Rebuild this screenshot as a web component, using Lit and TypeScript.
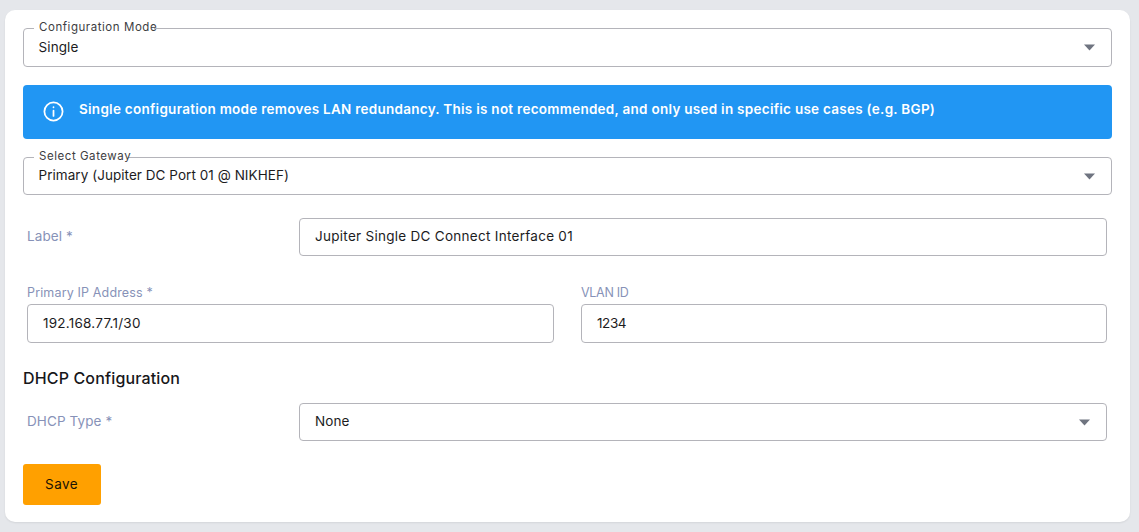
import { LitElement, html, css } from "lit";
import { customElement } from "lit/decorators.js";

const arrow = html`<svg class="arrow" viewBox="0 0 12 7" aria-hidden="true"><path d="M0.5 0.5h11L6 6.5z"/></svg>`;

@customElement("app-root")
export class AppRoot extends LitElement {
  static styles = css`
    :host {
      display: block;
      box-sizing: border-box;
      height: 532px;
      padding: 10px 9px 10px 5px;
      background: #e5e7eb;
      font-family: Inter, "Liberation Sans", sans-serif;
      font-size: 13.5px;
      color: #1c1c1e;
    }
    * { box-sizing: border-box; }
    .card {
      height: 512px;
      background: #fff;
      border-radius: 10px;
      box-shadow: 0 1px 2px rgba(0, 0, 0, 0.08);
      padding: 18px 18px 0 18px;
      display: flex;
      flex-direction: column;
    }
    .box {
      position: relative;
      display: flex;
      align-items: center;
      justify-content: space-between;
      border: 1px solid #b4b4ba;
      border-radius: 4px;
      background: #fff;
      height: 39px;
      padding: 0 15px 2px;
      letter-spacing: 0.1px;
    }
    .legend { padding: 0 15px 2px 14.5px; }
    .legend > .tag {
      position: absolute;
      left: 10px;
      top: -9px;
      padding: 0 5px;
      font-size: 11.5px;
      line-height: 15px;
      background: linear-gradient(to right, #fff calc(100% - 8px), transparent calc(100% - 8px));
      color: #3d3d42;
      letter-spacing: 0.55px;
    }
    .arrow { width: 13px; height: 7px; fill: #6f7480; flex: none; margin-top: 2px; }
    .alert {
      margin-top: 18px;
      height: 54px;
      background: #2196f3;
      border-radius: 4px;
      color: #fff;
      display: flex;
      align-items: center;
      gap: 15px;
      padding: 0 20px;
      font-weight: 600;
      font-size: 13.5px;
      letter-spacing: 0.27px;
    }
    .alert span { margin-bottom: 7px; }
    .alert svg { width: 21px; height: 21px; flex: none; margin-bottom: 2px; }
    .gw { margin-top: 18px; height: 38px; }
    .gw .val { letter-spacing: 0.05px; }
    .inset { padding: 0 5px 0 4px; }
    .row { display: flex; align-items: center; }
    .side { width: 272px; flex: none; color: #8792b8; padding-bottom: 2px; letter-spacing: 0.1px; }
    .row .box { flex: 1; }
    .labelrow { margin-top: 23px; }
    .h38 { height: 38px; }
    .wide { letter-spacing: 0.28px; }
    .ip { letter-spacing: 0.23px; }
    .num { letter-spacing: -0.4px; }
    .two {
      margin-top: 28px;
      display: grid;
      grid-template-columns: 527px 526px;
      gap: 0 27px;
    }
    .top {
      display: block;
      font-size: 12.5px;
      line-height: 18px;
      margin-bottom: 2px;
      color: #8792b8;
      letter-spacing: 0.15px;
    }
    .top.short { letter-spacing: -0.3px; }
    h3 {
      margin: 25px 0 0;
      font-size: 16px;
      line-height: 20px;
      font-weight: 500;
      color: #17171a;
      letter-spacing: 0.15px;
    }
    .dhcp { margin-top: 15px; }
    .btn {
      margin-top: 23px;
      width: 78px;
      height: 41px;
      border: 0;
      border-radius: 3px;
      background: #ffa000;
      color: #1a1204;
      font: inherit;
      letter-spacing: 0.4px;
      padding: 0 1px 2px 0;
    }
  `;

  render() {
    return html`<div class="card">
      <div class="box legend">
        <span class="tag">Configuration Mode</span><span class="val">Single</span>${arrow}
      </div>
      <div class="alert">
        <svg viewBox="0 0 24 24" fill="none" stroke="#fff" stroke-width="2" stroke-linecap="round">
          <circle cx="12" cy="12" r="10.4"/><path d="M12 11v6"/><path d="M12 7v.2"/>
        </svg>
        <span>Single configuration mode removes LAN redundancy. This is not recommended, and only used in specific use cases (e.g. BGP)</span>
      </div>
      <div class="box legend gw">
        <span class="tag">Select Gateway</span><span class="val">Primary (Jupiter DC Port 01 @ NIKHEF)</span>${arrow}
      </div>
      <div class="inset">
        <div class="row labelrow">
          <span class="side">Label *</span>
          <div class="box h38 wide">Jupiter Single DC Connect Interface 01</div>
        </div>
        <div class="two">
          <div><span class="top">Primary IP Address *</span><div class="box ip">192.168.77.1/30</div></div>
          <div><span class="top short">VLAN ID</span><div class="box num">1234</div></div>
        </div>
      </div>
      <h3>DHCP Configuration</h3>
      <div class="inset">
        <div class="row dhcp">
          <span class="side">DHCP Type *</span>
          <div class="box h38"><span>None</span>${arrow}</div>
        </div>
      </div>
      <div><button class="btn">Save</button></div>
    </div>`;
  }
}
